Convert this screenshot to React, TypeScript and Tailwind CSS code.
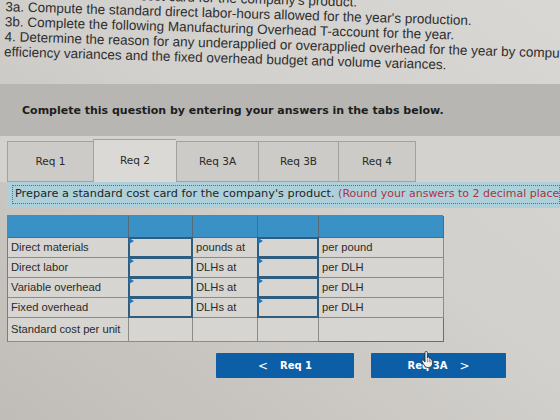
import React from "react";

const sans = { fontFamily: '"Liberation Sans", Arial, sans-serif' };
const verdana = { fontFamily: '"DejaVu Sans", Verdana, sans-serif' };

type Row = {
  label: string;
  mid: string;
  unit: string;
  inputs: boolean;
};

const rows: Row[] = [
  { label: "Direct materials", mid: "pounds at", unit: "per pound", inputs: true },
  { label: "Direct labor", mid: "DLHs at", unit: "per DLH", inputs: true },
  { label: "Variable overhead", mid: "DLHs at", unit: "per DLH", inputs: true },
  { label: "Fixed overhead", mid: "DLHs at", unit: "per DLH", inputs: true },
  { label: "Standard cost per unit", mid: "", unit: "", inputs: false },
];

const tabs = ["Req 1", "Req 2", "Req 3A", "Req 3B", "Req 4"];
const tabWidths = ["w-[86px]", "w-[83px]", "w-[82px]", "w-[80px]", "w-[78px]"];

function Flag() {
  return (
    <span className="absolute left-0 top-0 h-0 w-0 border-y-[3px] border-l-[5px] border-y-transparent border-l-[#1f74c0]" />
  );
}

function InputCell({ h }: { h: string }) {
  return (
    <div className={`relative ${h} border-r border-b border-[#8d8b88] bg-[#d7d5d1]`}>
      <div className="absolute -left-px -top-px bottom-[-1px] right-[-1px] border-2 border-[#2f5d7f]" />
      <Flag />
    </div>
  );
}

function TextCell({ h, children, last }: { h: string; children?: React.ReactNode; last?: boolean }) {
  return (
    <div
      className={`${h} flex items-center border-r border-b ${
        last ? "border-[#6f6d6a]" : "border-[#8d8b88]"
      } bg-[#d7d5d1] pl-[3px] text-[11.2px] text-[#2a2a2a]`}
      style={sans}
    >
      {children}
    </div>
  );
}

function HandCursor() {
  return (
    <svg width="14" height="18" viewBox="0 0 14 18" className="absolute left-[421px] top-[351px]">
      <path
        d="M4 1.6c0-.8.6-1.3 1.2-1.3s1.2.5 1.2 1.3V7.2l.1-.9c.5-.6 1.5-.5 1.8.2v1c.4-.6 1.4-.5 1.7.2v.9c.4-.5 1.4-.4 1.6.3V12c0 2.5-1.5 4.5-4 4.5H7c-2 0-3-1-4-2.5L1 10.6c-.4-.7 0-1.4.6-1.5.5-.1 1 .1 1.4.6L4 11V1.6z"
        fill="#f4f4f4"
        stroke="#222"
        strokeWidth="0.8"
        strokeLinejoin="round"
      />
      <path d="M6.4 8v3.2M8.3 8.3v3M10 8.8v2.6" stroke="#444" strokeWidth="0.6" />
    </svg>
  );
}

export default function App() {
  return (
    <div className="relative h-[420px] w-[560px] overflow-hidden bg-[linear-gradient(to_bottom_left,#d9d7d3_0%,#d2d0cc_45%,#c0bcb8_100%)]">
      {/* question text */}
      <div
        className="-mt-[16px] origin-left rotate-[1.7deg] pl-[5px] text-[13.5px] leading-[15px] whitespace-nowrap text-[#2e2e2e]"
        style={sans}
      >
        <div>2. Prepare a standard cost card for the company's product.</div>
        <div>3a. Compute the standard direct labor-hours allowed for the year's production.</div>
        <div>3b. Complete the following Manufacturing Overhead T-account for the year.</div>
        <div>4. Determine the reason for any underapplied or overapplied overhead for the year by computing the variable overhead rate and</div>
        <div>efficiency variances and the fixed overhead budget and volume variances.</div>
      </div>

      {/* instructions band */}
      <div className="mt-[25px] h-[52px] bg-[#b7b6b2] pl-[22px] pt-[20px]">
        <div className="text-[11px] leading-[14px] font-bold text-[#1d1d1d] whitespace-nowrap" style={verdana}>
          Complete this question by entering your answers in the tabs below.
        </div>
      </div>

      {/* tabs */}
      <div className="flex h-[46px] items-end bg-[#d4d2ce] pl-[7px]">
        {tabs.map((t, i) => (
          <div
            key={t}
            className={`${tabWidths[i]} flex items-center justify-center border-t border-l border-[#a3a19d] text-[10.5px] text-[#2a2a2a] ${
              i === 1 ? "h-[43px] bg-[#dbd9d5]" : "h-[41px] border-b bg-[#cdcbc7]"
            } ${i === tabs.length - 1 ? "border-r" : ""}`}
            style={verdana}
          >
            {t}
          </div>
        ))}
      </div>

      {/* prompt bar */}
      <div className="ml-[7px] h-[26px] bg-[#aed0da] pl-[5px] pt-[3px]">
        <div
          className="flex h-[19px] items-center border border-dotted border-[#2f77b5] pl-[2px] text-[11.3px] whitespace-nowrap text-[#1f1f1f]"
          style={verdana}
        >
          Prepare a standard cost card for the company's product.&nbsp;
          <span className="text-[11px] text-[#b3303a]">(Round your answers to 2 decimal places.)</span>
        </div>
      </div>

      {/* standard cost card */}
      <div className="ml-[7px] mt-[7px] grid w-[436px] grid-cols-[121px_64px_65px_61px_125px] border-t border-l border-[#7e7c79]">
        {[0, 1, 2, 3, 4].map((c) => (
          <div key={c} className="h-[22px] border-r border-b border-[#566a78] bg-[#3a91c5]" />
        ))}
        {rows.map((r, ri) => {
          const h = ri === rows.length - 1 ? "h-[24px]" : "h-[20px]";
          const lastRow = ri === rows.length - 1;
          return (
            <React.Fragment key={r.label}>
              <TextCell h={h}>{r.label}</TextCell>
              {r.inputs ? <InputCell h={h} /> : <TextCell h={h} />}
              <TextCell h={h}>{r.mid}</TextCell>
              {r.inputs ? <InputCell h={h} /> : <TextCell h={h} />}
              <TextCell h={h} last={lastRow}>
                {r.unit}
              </TextCell>
            </React.Fragment>
          );
        })}
      </div>

      {/* navigation */}
      <div className="ml-[216px] mt-[11px] flex gap-[17px]">
        <div
          className="flex h-[25px] w-[138px] items-center justify-center gap-[12px] rounded-[1px] bg-[#0c5ea7] text-[10px] font-bold text-white"
          style={verdana}
        >
          <span className="text-[12px] font-normal">&lt;</span>
          <span>Req 1</span>
        </div>
        <div
          className="flex h-[25px] w-[135px] items-center justify-center gap-[12px] rounded-[1px] bg-[#0c5ea7] text-[10px] font-bold text-white"
          style={verdana}
        >
          <span>Req 3A</span>
          <span className="text-[12px] font-normal">&gt;</span>
        </div>
      </div>

      <HandCursor />
    </div>
  );
}
